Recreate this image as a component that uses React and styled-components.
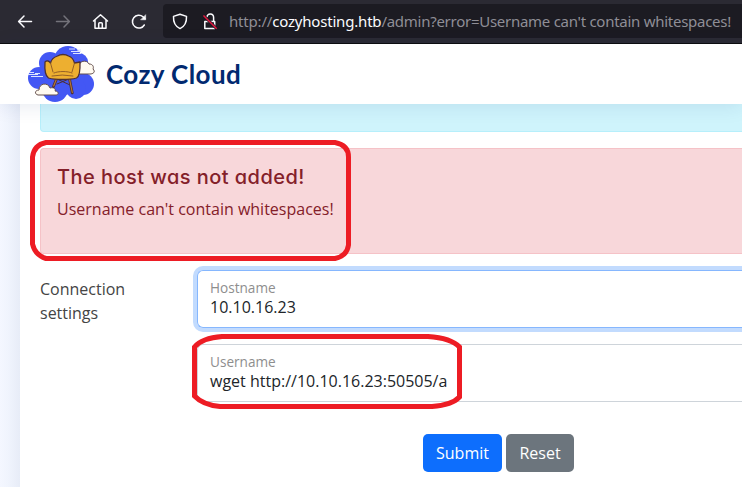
import React from 'react';
import styled, { createGlobalStyle } from 'styled-components';

const GlobalStyle = createGlobalStyle`
  * { box-sizing: border-box; }
  body { margin: 0; overflow: hidden; background: #f6f9ff; }
`;

const Window = styled.div`
  position: relative;
  width: 742px;
  height: 487px;
  overflow: hidden;
  display: flex;
  flex-direction: column;
  font: 16px/24px "Open Sans", sans-serif;
  color: #444;
`;

const Toolbar = styled.div`
  flex: none;
  height: 44px;
  display: flex;
  align-items: flex-start;
  background: #2b2a33;
  border-bottom: 1px solid #0c0c0d;
`;

const NavIcons = styled.div`
  display: flex;
  width: 163px;
  height: 43px;
`;

const AddressBar = styled.div`
  flex: 1;
  height: 34px;
  margin-top: 4px;
  display: flex;
  background: #1c1b22;
  border-radius: 4px 0 0 4px;
  white-space: nowrap;
`;

const BarIcons = styled.div`
  flex: none;
  width: 66px;
  height: 34px;
`;

const Url = styled.div`
  font: 15px/34px "Noto Sans", sans-serif;
  letter-spacing: -0.19px;
  color: #8f8e96;
`;

const Domain = styled.span`
  color: #fbfbfe;
`;

const Path = styled.span`
  letter-spacing: -0.27px;
`;

const Header = styled.header`
  flex: none;
  position: relative;
  z-index: 1;
  height: 60px;
  display: flex;
  background: #fff;
  box-shadow: 0 2px 20px rgba(1, 41, 112, 0.1);
`;

const LogoBox = styled.div`
  width: 106px;
  height: 60px;
`;

const Brand = styled.div`
  font: 700 26px/60px Lato, sans-serif;
  letter-spacing: 0.42px;
  color: #012970;
`;

const Main = styled.main`
  flex: 1;
  display: flex;
  min-height: 0;
`;

const Gutter = styled.div`
  width: 20px;
  background: linear-gradient(90deg, #f4f7ff 0, #f0f4fd 8px, #e7ecf7 20px);
`;

const Card = styled.section`
  flex: 1;
  min-width: 0;
  padding-left: 20px;
  background: #fff;
`;

const Alert = styled.div`
  height: ${(p) => p.$height}px;
  margin-bottom: 16px;
  padding: ${(p) => (p.$cut ? 0 : 16)}px;
  color: ${(p) => p.$color};
  background: ${(p) => p.$bg};
  border: 1px solid ${(p) => p.$border};
  border-right: 0;
  border-top-width: ${(p) => (p.$cut ? 0 : 1)}px;
  border-radius: ${(p) => (p.$cut ? '0 0 0 4px' : '4px 0 0 4px')};
`;

const AlertTitle = styled.h4`
  margin: 0 0 8px;
  font: 500 20px/24px Inter, sans-serif;
  font-feature-settings: "cv11";
  letter-spacing: 0.45px;
`;

const AlertText = styled.p`
  margin: 0;
`;

const FormRow = styled.div`
  display: flex;
`;

const FormLabel = styled.div`
  width: 157px;
  padding: 7px 40px 0 0;
`;

const Fields = styled.div`
  flex: 1;
  display: flex;
  flex-direction: column;
  gap: 16px;
`;

const Field = styled.div`
  height: 58px;
  padding: 8px 12px;
  border: 1px solid ${(p) => (p.$focus ? '#86b7fe' : '#ced4da')};
  border-right: 0;
  border-radius: 6px 0 0 6px;
  box-shadow: ${(p) => (p.$focus ? '0 0 0 4px #c2dbfe' : 'none')};
`;

const FieldLabel = styled.div`
  font-size: 13.6px;
  line-height: 18px;
  color: #8e8e8e;
`;

const FieldValue = styled.div`
  line-height: 20px;
  color: #212529;
`;

const Actions = styled.div`
  display: flex;
  gap: 4px;
  padding: 32px 0 0 383px;
`;

const Button = styled.button`
  width: ${(p) => p.$width}px;
  height: 38px;
  padding: 0;
  border: 0;
  border-radius: 5px;
  background: ${(p) => p.$bg};
  color: #fff;
  font: 16px/38px "Open Sans", sans-serif;
`;

const Marks = styled.svg`
  position: absolute;
  z-index: 2;
  inset: 0;
  pointer-events: none;
`;

function BrowserIcons() {
  return (
    <svg width="163" height="43" fill="none" stroke="#fbfbfe" strokeWidth="1.5" strokeLinecap="round" strokeLinejoin="round">
      <path d="M31.5 21.5H18.8M24 16l-5.4 5.5L24 27" />
      <path d="M56.5 21.5h12.7M64 16l5.4 5.5L64 27" stroke="#74737b" />
      <path d="M93.5 21l7-6.3 7 6.3M95 20v8.3h11V20M98.7 28v-4.2q0-1 1-1h1.6q1 0 1 1V28" />
      <path d="M144.3 25A6.4 6.4 0 1 1 143 16.8l2 2" />
      <path d="M145.7 15v4.8h-4.8z" fill="#fbfbfe" strokeWidth=".5" />
    </svg>
  );
}

function SecurityIcons() {
  return (
    <svg width="66" height="34" fill="none" stroke="#fbfbfe" strokeWidth="1.5" strokeLinejoin="round">
      <path d="M17 10.2l6.5 2.2c.3 6.2-1.7 10-6.5 12.2-4.8-2.2-6.8-6-6.5-12.2z" />
      <path d="M41.8 17.5h9.9v7h-9.9zM44 13.3c0-4.7 6.6-4.2 6.6.2v4" />
      <path d="M40.5 11.5l13.2 13.2" stroke="#1c1b22" strokeWidth="3" />
      <path d="M40.5 11.5l13.2 13.2" stroke="#e5173f" strokeWidth="1.5" />
    </svg>
  );
}

function CozyLogo() {
  return (
    <svg width="106" height="60">
      <g fill="#4357f4">
        <circle cx="39" cy="34" r="11" />
        <circle cx="50" cy="19" r="11" />
        <circle cx="68" cy="16" r="14" />
        <circle cx="79" cy="18" r="9" />
        <circle cx="83" cy="40" r="11" />
        <circle cx="76" cy="45" r="10" />
        <circle cx="55" cy="45" r="13" />
        <ellipse cx="62" cy="31" rx="23" ry="20" />
      </g>
      <path d="M69 5h6m2 1h4M71 7.5h10m-8 2h8M29 28.5h5m-6 2h10m-7 2h12m-8-3h5" fill="none" stroke="#dce3ff" strokeWidth="1" />
      <g fill="#fffaf0" stroke="#65504e" strokeWidth="1">
        <path d="M77 30c-4-3-1-7 2-7-1-6 8-8 10-3 4 0 5 3 4 5 3 3 0 5-3 5z" />
        <path d="M38 51c-4-1-3-5 1-5 0-7 9-8 11-2 4-1 6 1 5 3 4 0 4 4 1 4z" />
      </g>
      <g stroke="#4d3034" fill="none" strokeLinejoin="round" strokeLinecap="round">
        <path d="M57 40l12-5M57 35l13 6" strokeWidth="1" />
        <path d="M56.5 35l-3 7.5M69.5 35l2.8 14" strokeWidth="2.8" />
        <path d="M56.5 35l-2.8 7M69.5 35l2.8 13.5" stroke="#b77634" strokeWidth="1.2" />
        <path d="M50.5 19c1-4 4-6 7-7 3-2 8-2 11 0 3 1 5 3 6 7l5.5-1q.5 14-3.5 16c-7 2-21 2-28 0-3-2-4-9-3.5-16 2-2 4-1 5.5 1z" fill="#edaf30" strokeWidth="1.3" />
        <path d="M50.5 19l2.5 9M74.5 19l-2.5 9M54 29c4-2 14-2 18 0M52 32q10-2 21 0" stroke="#895626" strokeWidth=".9" />
      </g>
    </svg>
  );
}

export default function App() {
  return (
    <Window>
      <GlobalStyle />
      <Toolbar>
        <NavIcons><BrowserIcons /></NavIcons>
        <AddressBar>
          <BarIcons><SecurityIcons /></BarIcons>
          <Url>http://<Domain>cozyhosting.htb</Domain><Path>/admin?error=Username can't contain whitespaces!</Path></Url>
        </AddressBar>
      </Toolbar>
      <Header>
        <LogoBox><CozyLogo /></LogoBox>
        <Brand>Cozy Cloud</Brand>
      </Header>
      <Main>
        <Gutter />
        <Card>
          <Alert $cut $height={28} $bg="#cff4fc" $border="#b6effb" />
          <Alert $height={106} $bg="#f8d7da" $border="#f5c2c7" $color="#842029">
            <AlertTitle>The host was not added!</AlertTitle>
            <AlertText>Username can't contain whitespaces!</AlertText>
          </Alert>
          <FormRow>
            <FormLabel>Connection settings</FormLabel>
            <Fields>
              <Field $focus>
                <FieldLabel>Hostname</FieldLabel>
                <FieldValue>10.10.16.23</FieldValue>
              </Field>
              <Field>
                <FieldLabel>Username</FieldLabel>
                <FieldValue>wget http://10.10.16.23:50505/a</FieldValue>
              </Field>
            </Fields>
          </FormRow>
          <Actions>
            <Button $width={79} $bg="#0d6efd">Submit</Button>
            <Button $width={68} $bg="#6c757d">Reset</Button>
          </Actions>
        </Card>
      </Main>
      <Marks width="742" height="487" fill="none" stroke="#ed1c24" strokeWidth="5">
        <path d="M46 142.5H335Q348.5 145 348.5 157V245Q347 256 335 258.5H46Q35 255 32.5 244V157Q34 145 46 142.5z" />
        <path d="M222 336.5H428Q451 338 459.5 347V397Q452 405 432 406.5H220Q203 405 194.5 396V347Q202 338 222 336.5z" />
      </Marks>
    </Window>
  );
}
